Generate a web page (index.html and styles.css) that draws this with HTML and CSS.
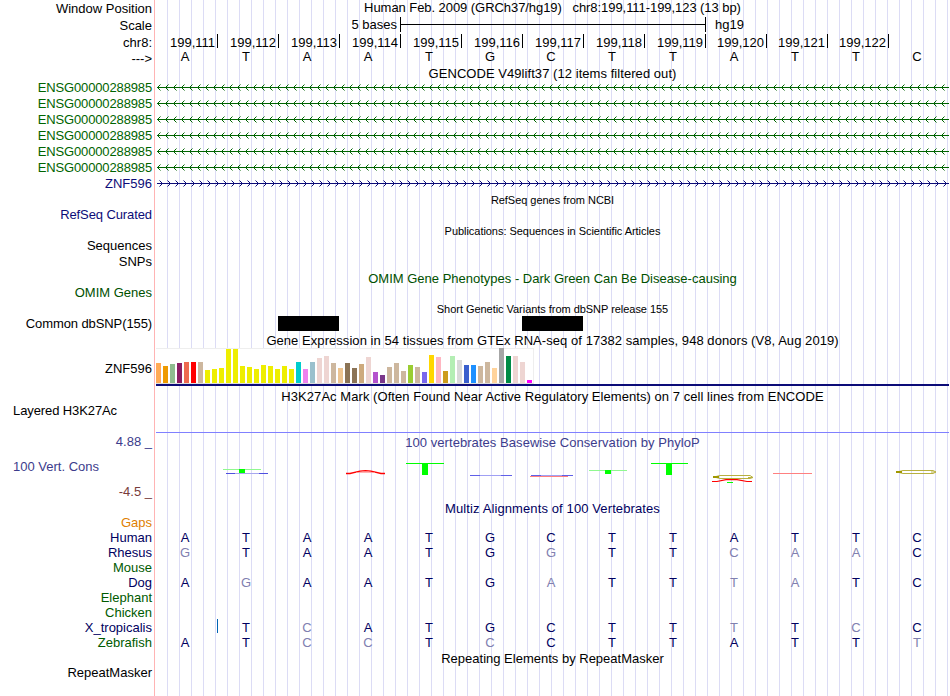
FILE: index.html
```
<!DOCTYPE html>
<html lang="en">
<head>
  <meta charset="UTF-8" />
  <title>chr8:199,111-199,123</title>
  <link rel="stylesheet" href="styles.css">
</head>
<body>

  <svg class="defs" width="0" height="0">
    <defs>
      <pattern id="left" width="8" height="16" patternUnits="userSpaceOnUse">
        <path d="M4.5 4.5 L1.5 7.5 L4.5 10.5" fill="none" stroke="#006400"/>
      </pattern>
      <pattern id="right" width="8" height="16" patternUnits="userSpaceOnUse">
        <path d="M3.5 4.5 L6.5 7.5 L3.5 10.5" fill="none" stroke="#0c0c78"/>
      </pattern>
    </defs>
  </svg>

  <main class="browser">
    <div class="row pos">
      <div class="label">Window Position</div>
      <div class="title assembly">Human Feb. 2009 (GRCh37/hg19) &nbsp; chr8:199,111-199,123 (13 bp)</div>
    </div>
    <div class="row scale">
      <div class="label">Scale</div>
      <div class="ruler"><span class="from">5 bases</span><span class="bar"></span><span class="db">hg19</span></div>
    </div>
    <div class="row coords">
      <div class="label">chr8:</div>
      <div class="ticks"></div>
    </div>
    <div class="row strand">
      <div class="label">---&gt;</div>
      <div class="bases seq" data-seq="ATAATGCTTATTC"></div>
    </div>

    <div class="title wide gencode">GENCODE V49lift37 (12 items filtered out)</div>
    <div class="row green"><div class="label">ENSG00000288985</div><svg class="gene" data-dir="left"></svg></div>
    <div class="row green"><div class="label">ENSG00000288985</div><svg class="gene" data-dir="left"></svg></div>
    <div class="row green"><div class="label">ENSG00000288985</div><svg class="gene" data-dir="left"></svg></div>
    <div class="row green"><div class="label">ENSG00000288985</div><svg class="gene" data-dir="left"></svg></div>
    <div class="row green"><div class="label">ENSG00000288985</div><svg class="gene" data-dir="left"></svg></div>
    <div class="row green"><div class="label">ENSG00000288985</div><svg class="gene" data-dir="left"></svg></div>
    <div class="row blue"><div class="label">ZNF596</div><svg class="gene" data-dir="right"></svg></div>

    <div class="title wide small refseq">RefSeq genes from NCBI</div>
    <div class="row blue"><div class="label tight">RefSeq Curated</div></div>

    <div class="title wide small pubs">Publications: Sequences in Scientific Articles</div>
    <div class="row"><div class="label">Sequences</div></div>
    <div class="row"><div class="label">SNPs</div></div>

    <div class="title wide omim">OMIM Gene Phenotypes - Dark Green Can Be Disease-causing</div>
    <div class="row omim-row"><div class="label">OMIM Genes</div></div>

    <div class="title wide small snp-title">Short Genetic Variants from dbSNP release 155</div>
    <div class="row">
      <div class="label tight">Common dbSNP(155)</div>
      <div class="snps"><span></span><span></span></div>
    </div>

    <div class="title wide gtex-title">Gene Expression in 54 tissues from GTEx RNA-seq of 17382 samples, 948 donors (V8, Aug 2019)</div>
    <div class="row gtex-row">
      <div class="label">ZNF596</div>
      <div class="gtex"><div class="tissues"></div></div>
    </div>

    <div class="title wide h3k-title">H3K27Ac Mark (Often Found Near Active Regulatory Elements) on 7 cell lines from ENCODE</div>
    <div class="row h3k">
      <div class="label start tight">Layered H3K27Ac</div>
      <div class="signal"></div>
    </div>

    <div class="row phylop">
      <div class="limits">
        <div class="label max">4.88 _</div>
        <div class="label start">100 Vert. Cons</div>
        <div class="label min">-4.5 _</div>
      </div>
      <div class="cons">
        <div class="title cons-title">100 vertebrates Basewise Conservation by PhyloP</div>
        <svg width="793" height="36" viewBox="156 455 793 36" fill="none">
          <path d="M223 469.5H261" stroke="#90f890"/>
          <path d="M226 473.5H235M259 473.5H268" stroke="#5050e0"/>
          <path d="M235 473.5H259" stroke="#a8a8f0"/>
          <path d="M239 469H245V473H239z" fill="#0f0"/>
          <path d="M346 473.5H350L360 471.2L365.5 470.6L371 471.2L381 473.5H385" stroke="#f00" stroke-width="1.3"/>
          <path d="M356 472.5H375" stroke="#ff9090" stroke-width="0.7"/>
          <path d="M406 463.5H444M651 463.5H688" stroke="#0f0"/>
          <path d="M422 463H428V475H422zM666 463H672V475H666z" fill="#0f0"/>
          <path d="M470 475.5H480M501 475.5H512M531 475.5H541M562 475.5H573" stroke="#6060e8"/>
          <path d="M480 475.5H501M541 475.5H562" stroke="#a0a0f4"/>
          <path d="M530 476.5H568" stroke="#ff8080"/>
          <path d="M589 470.5H627" stroke="#90f890"/>
          <path d="M605 470H611V474H605z" fill="#0f0"/>
          <path d="M753 477.5L750 475.5H720L714 477L720 478.5H750L753 477.5H748" stroke="#b8b040"/>
          <path d="M713 476H719V478H713z" fill="#a09800"/>
          <path d="M712 481.5H717L726 479.7H737L747 481.5H752" stroke="#f00" stroke-width="1.2"/>
          <path d="M727 482.5H733" stroke="#0f0"/>
          <path d="M773 473.5H812" stroke="#ff8080"/>
          <path d="M936 472L933 470.5H903L897 472L903 473.5H933L936 472H931" stroke="#b8b040"/>
          <path d="M896 471H902V473H896z" fill="#a09800"/>
        </svg>
      </div>
    </div>

    <div class="title wide multiz">Multiz Alignments of 100 Vertebrates</div>
    <!-- lower case: base differs from human -->
    <div class="align">
      <div class="row orange"><div class="label">Gaps</div></div>
      <div class="row navy"><div class="label">Human</div><div class="bases" data-seq="ATAATGCTTATTC"></div></div>
      <div class="row navy"><div class="label">Rhesus</div><div class="bases" data-seq="gTAATGgTTcaaC"></div></div>
      <div class="row forest"><div class="label">Mouse</div></div>
      <div class="row navy"><div class="label">Dog</div><div class="bases" data-seq="AgAATGaTTtaTC"></div></div>
      <div class="row forest"><div class="label">Elephant</div></div>
      <div class="row forest"><div class="label">Chicken</div></div>
      <div class="row navy"><div class="label">X_tropicalis</div><div class="bases" data-seq="|TcATGCTTtTcC"></div></div>
      <div class="row forest"><div class="label">Zebrafish</div><div class="bases" data-seq="ATccTcCTTATTt"></div></div>
    </div>

    <div class="title wide repeat">Repeating Elements by RepeatMasker</div>
    <div class="row"><div class="label">RepeatMasker</div></div>
  </main>

  <script src="script.js"></script>
</body>
</html>
```
FILE: styles.css
```
* {
  margin: 0;
  padding: 0;
  box-sizing: border-box;
}

body {
  background: white;
  color: black;
  font-family: "Liberation Sans", Arial, sans-serif;
  font-size: 13px;
  line-height: 16px;
  overflow: hidden;
}

.defs {
  display: block;
}

.browser {
  width: 949px;
  height: 696px;
  background:
    linear-gradient(#ffb4b4, #ffb4b4) 154px 0 / 1px 100% no-repeat,
    repeating-linear-gradient(to right, transparent 0 11px, #dcdcf5 11px 12px) 156px 0 / 793px 100% no-repeat;
}

.row {
  display: grid;
  grid-template-columns: 156px 793px;
  height: 16px;
}

.label {
  text-align: right;
  padding-right: 4px;
  white-space: nowrap;
}

.label.tight {
  letter-spacing: -0.1px;
}

.label.start {
  text-align: left;
  padding-left: 13px;
}

.title {
  text-align: center;
  white-space: nowrap;
  letter-spacing: 0.055px;
}

.wide {
  padding-left: 156px;
  height: 15px;
}

.small {
  font-size: 11px;
  letter-spacing: -0.04px;
}

.green { color: #006400; }
.green .label { letter-spacing: -0.14px; }
.blue { color: #0c0c78; }
.orange { color: #e08000; }
.navy { color: #000060; }
.forest { color: #005a00; }

/* position and ruler */
.pos {
  height: 17px;
  padding-top: 1px;
}

.assembly {
  margin-top: -1px;
  letter-spacing: -0.06px;
}

.scale {
  height: 17px;
  padding-top: 1px;
}

.ruler {
  display: grid;
  grid-template-columns: 241px 312px auto;
  margin-top: -1px;
}

.ruler .from {
  text-align: right;
}

.ruler .bar {
  margin: 0 3px;
  height: 15px;
  border-left: 1px solid black;
  border-right: 1px solid black;
  background: linear-gradient(black, black) 0 7px / 100% 1px no-repeat;
}

.ruler .db {
  padding-left: 6px;
}

.coords {
  line-height: 18px;
}

.ticks {
  display: flex;
}

.ticks span {
  width: 61px;
  height: 14px;
  text-align: right;
  padding-right: 2px;
  border-right: 1px solid black;
}

.ticks span:first-child {
  width: 62px;
}

.bases {
  display: grid;
  grid-template-columns: repeat(13, 61px);
  text-align: center;
  margin-left: -1.5px;
  color: #000060;
}

.strand .label {
  padding-top: 1px;
}

.bases.seq {
  color: black;
  margin-top: -1px;
}

.bases .diff {
  color: #8080b0;
}

.bases .insert {
  justify-self: end;
  width: 1px;
  height: 14px;
  margin-right: -2.5px;
  margin-top: -1px;
  background: #0064b4;
}

/* genes */
.gencode {
  height: 14px;
}

.gene {
  display: block;
  width: 793px;
  height: 16px;
}

.omim,
.omim-row {
  color: #005000;
}

.omim {
  line-height: 18px;
  letter-spacing: 0;
}

.snps {
  display: flex;
  gap: 183px;
  padding-left: 122px;
}

.snps span {
  width: 61px;
  height: 15px;
  background: black;
}

/* expression */
.gtex-title {
  height: 16px;
  line-height: 18px;
}

.gtex-row {
  height: 38px;
}

.gtex-row .label {
  padding-top: 13px;
}

.gtex {
  border-bottom: 2px solid #0c0c78;
}

.tissues {
  display: flex;
  align-items: flex-end;
  gap: 2px;
  width: 378px;
  height: 36px;
  background: white;
  border: 1px solid #eee;
  border-left: 0;
  border-bottom-color: #ddd;
}

.tissues i {
  flex: none;
  width: 5px;
}

.h3k-title {
  height: 17px;
  padding-top: 3px;
}

.h3k {
  height: 30px;
}

.signal {
  border-bottom: 1px solid #8080ff;
}

/* conservation */
.phylop {
  height: 67px;
}

.limits {
  display: flex;
  flex-direction: column;
  justify-content: space-between;
  color: #3c3c8c;
}

.limits .max {
  height: 16px;
  line-height: 18px;
}

.limits .min {
  color: #783c3c;
}

.cons-title {
  color: #3c3c8c;
  padding-top: 2px;
}

.cons svg {
  display: block;
  margin-top: 4px;
}

/* alignments */
.multiz {
  color: #000060;
  height: 15px;
  line-height: 18px;
  letter-spacing: 0.11px;
}

.align .row {
  height: 15px;
  line-height: 15px;
}

.repeat {
  line-height: 18px;
  letter-spacing: 0;
}
```
FILE: script.js
```
const SVG = 'http://www.w3.org/2000/svg';

// GTEx tissues: height, colour
const tissues = [
  [20, '#ffaa56'], [17, '#ee9a00'], [19, '#8fbc8f'], [20, '#8b1c62'], [21, '#ee6a50'], [21, '#ff0000'],
  [21, '#cdb79e'], [13, '#eeee00'], [14, '#eeee00'], [15, '#eeee00'], [34, '#eeee00'], [34, '#eeee00'],
  [17, '#eeee00'], [16, '#eeee00'], [14, '#eeee00'], [18, '#eeee00'], [17, '#eeee00'], [14, '#eeee00'],
  [17, '#eeee00'], [14, '#eeee00'], [21, '#00cdcd'], [14, '#ee82ee'], [21, '#9ac0cd'], [25, '#eed5d2'],
  [27, '#eed5d2'], [20, '#cdb79e'], [15, '#eec591'], [20, '#8b7355'], [15, '#8b7355'], [19, '#cdaa7d'],
  [26, '#eed5d2'], [11, '#b452cd'], [8, '#7a378b'], [16, '#cdb79e'], [20, '#cdb79e'], [12, '#cdb79e'],
  [18, '#9acd32'], [16, '#cdb79e'], [11, '#7a67ee'], [28, '#ffd700'], [26, '#ffb6c1'], [12, '#cd9b1d'],
  [27, '#b4eeb4'], [23, '#d9d9d9'], [18, '#3a5fcd'], [18, '#1e90ff'], [17, '#cdb79e'], [21, '#cdb79e'],
  [15, '#ffd39b'], [35, '#a6a6a6'], [27, '#008b45'], [27, '#eed5d2'], [21, '#eed5d2'], [3, '#ff00ff']
];

const chart = document.querySelector('.tissues');
tissues.forEach(([height, color]) => {
  const bar = document.createElement('i');
  bar.style.height = height + 'px';
  bar.style.background = color;
  chart.append(bar);
});

const ticks = document.querySelector('.ticks');
for (let pos = 111; pos <= 122; pos++) {
  const tick = document.createElement('span');
  tick.textContent = '199,' + pos;
  ticks.append(tick);
}

document.querySelectorAll('.bases').forEach(row => {
  for (const base of row.dataset.seq) {
    const cell = document.createElement('span');
    if (base === '|') {
      cell.className = 'insert';
    } else {
      cell.textContent = base.toUpperCase();
      if (base !== base.toUpperCase()) cell.className = 'diff';
    }
    row.append(cell);
  }
});

function rect(x, y, width, height, fill) {
  const el = document.createElementNS(SVG, 'rect');
  Object.entries({ x, y, width, height, fill }).forEach(([k, v]) => el.setAttribute(k, v));
  return el;
}

document.querySelectorAll('.gene').forEach(svg => {
  const left = svg.dataset.dir === 'left';
  svg.append(rect(0, 0, 793, 16, `url(#${svg.dataset.dir})`));
  svg.append(rect(1, 7, 792, 1, left ? '#006400' : '#0c0c78'));
});
```
